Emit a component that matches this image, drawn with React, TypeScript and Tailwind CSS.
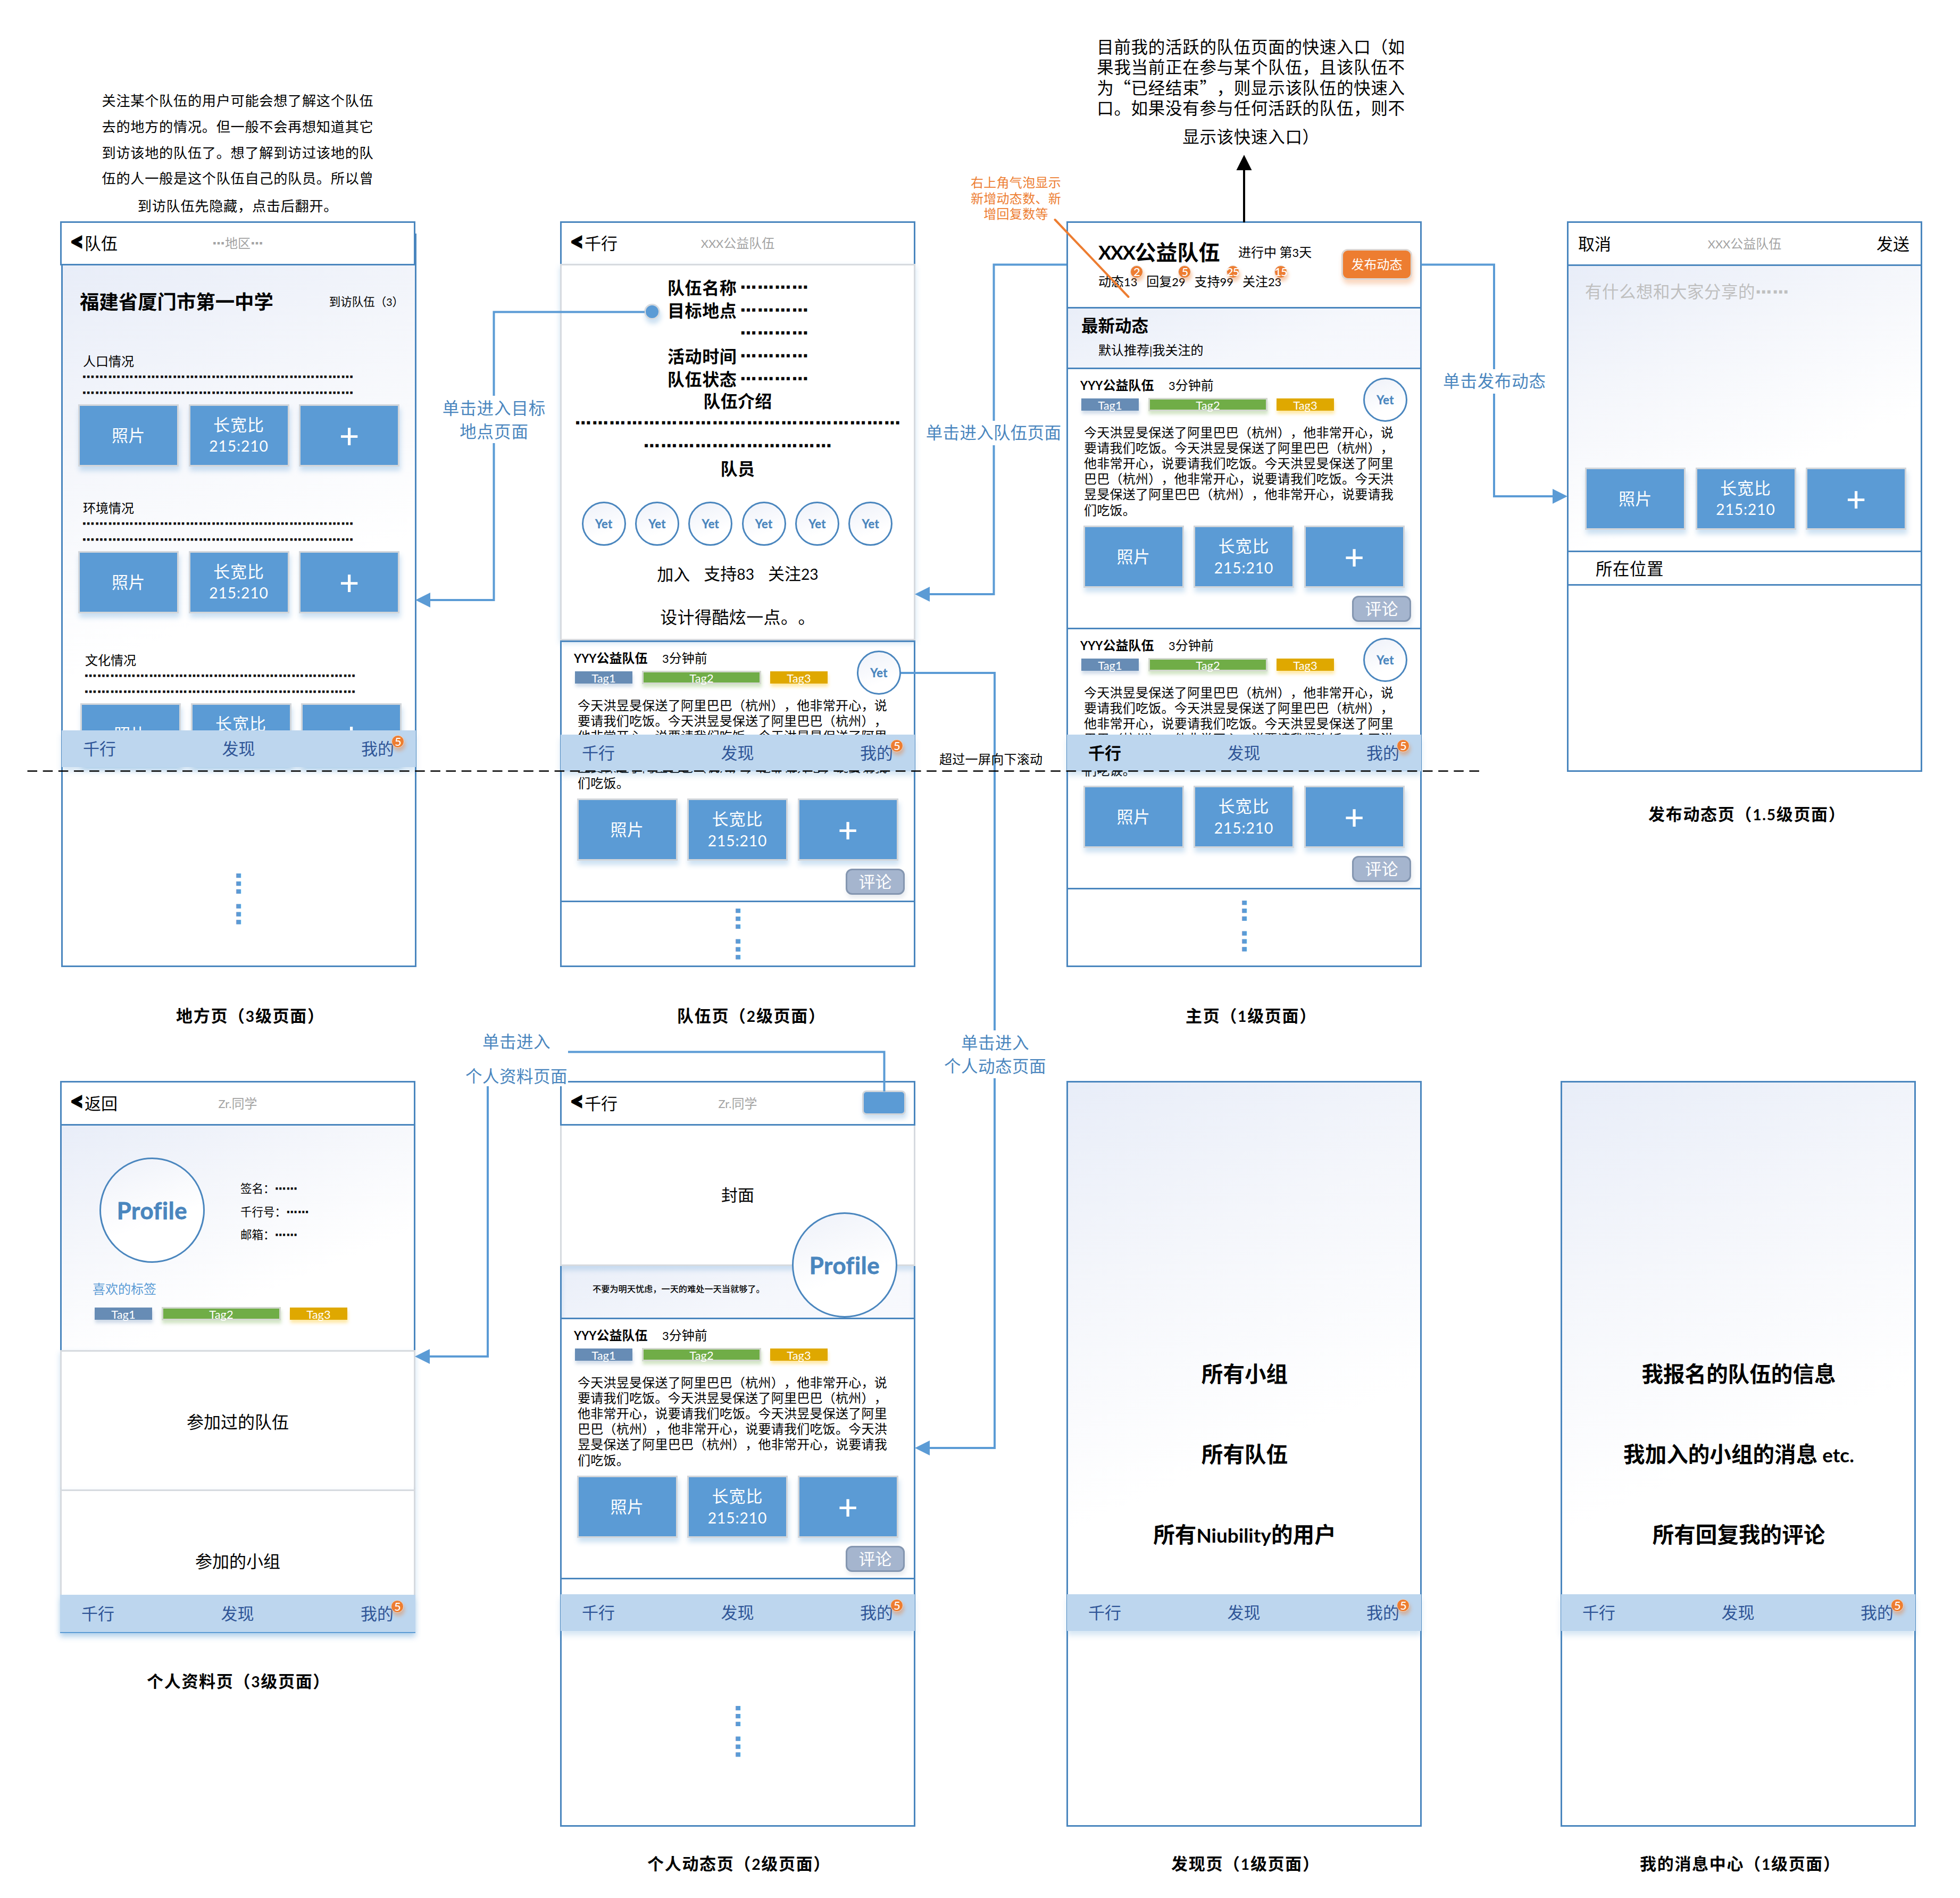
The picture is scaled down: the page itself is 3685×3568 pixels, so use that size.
import React from 'react';
import { clsx } from 'clsx';

type TextProps = { children: string; className?: string };

/* Inline text: Latin runs and ellipses get their own face and size next to the CJK text. */
function T({ children, className }: TextProps) {
  const runs = children.split(/(…+|[\x20-\x7e]+)/).filter(Boolean);
  return (
    <span
      lang="zh-CN"
      className={clsx(
        "inline-block shrink-0 -translate-y-[0.055em] font-['Noto_Sans_CJK_SC',sans-serif] leading-none whitespace-pre [text-spacing-trim:space-all]",
        className,
      )}
    >
      {runs.map((run, i) => {
        if (run[0] === '…') {
          return (
            <span
              key={i}
              className="relative -top-[0.29em] font-['Liberation_Sans',sans-serif] font-bold [-webkit-text-stroke:0.04em]"
            >
              {run}
            </span>
          );
        }
        if (/^[\x20-\x7e]/.test(run)) {
          return (
            <span key={i} className="font-['Lato',sans-serif] text-[0.91em]">
              {run}
            </span>
          );
        }
        return <span key={i}>{run}</span>;
      })}
    </span>
  );
}

const gradient = 'bg-[linear-gradient(157deg,#e8edf8_0%,#f4f6fb_32%,#ffffff_68%)]';

function Back({ label }: { label: string }) {
  return (
    <div className="flex items-center pl-4">
      <span className="mr-px flex h-[40px] w-[26px] -translate-y-[5px] items-center justify-center font-['Lato',sans-serif] text-[42px] leading-none font-black text-black [-webkit-text-stroke:3.5px]">
        {'<'}
      </span>
      <T className="text-[31px]">{label}</T>
    </div>
  );
}

function Bar({
  left,
  title,
  right,
  className,
}: {
  left: React.ReactNode;
  title: string;
  right?: React.ReactNode;
  className?: string;
}) {
  return (
    <div className={clsx('grid shrink-0 grid-cols-[1fr_auto_1fr] items-center bg-white', className)}>
      {left}
      <T className="text-[24px] text-[#a3a3a3]">{title}</T>
      <div className="flex justify-end">{right}</div>
    </div>
  );
}

function Badge({ children, className }: TextProps) {
  return (
    <span
      className={clsx(
        "absolute flex size-[24px] items-center justify-center rounded-full border-[1.5px] border-[#e8dfda] bg-[#ed7d31] font-['Lato',sans-serif] text-[22px] leading-none font-medium tracking-[-1px] text-white shadow-[2px_6px_6px_rgba(237,125,49,0.4)]",
        className,
      )}
    >
      {children}
    </span>
  );
}

function Nav({ active, className }: { active?: boolean; className?: string }) {
  return (
    <div
      className={clsx(
        'flex h-[69px] shrink-0 items-center justify-between bg-[#bdd6ee] pr-[41px] pl-[40px] text-[31px] text-[#2f5597] shadow-[0_8px_10px_rgba(91,155,213,0.25)]',
        className,
      )}
    >
      <T className={active ? 'font-bold text-black' : ''}>千行</T>
      <T>发现</T>
      <span className="relative flex">
        <T>我的</T>
        <Badge className="-top-[10px] -right-[19px]">5</Badge>
      </span>
    </div>
  );
}

const tile =
  'flex h-[117px] w-[189px] shrink-0 flex-col items-center justify-center border-[3px] border-[#d3d6da] bg-[#5b9bd5] text-white shadow-[2px_8px_9px_rgba(91,155,213,0.3)]';

function Photos({ className }: { className?: string }) {
  return (
    <div className={clsx('flex shrink-0 gap-[18.5px]', className)}>
      <div className={tile}>
        <T className="text-[31px] tracking-[0.6px]">照片</T>
      </div>
      <div className={tile}>
        <div className="flex h-10 items-center">
          <T className="text-[31px] tracking-[1px]">长宽比</T>
        </div>
        <div className="flex h-10 items-center">
          <T className="text-[31px] tracking-[0.9px]">215:210</T>
        </div>
      </div>
      <div className={tile}>
        <span className="font-['Lato',sans-serif] text-[65px] leading-none font-medium">+</span>
      </div>
    </div>
  );
}

function Tags({ className }: { className?: string }) {
  return (
    <div className={clsx('flex h-[23px] shrink-0 items-center text-[24px] text-white', className)}>
      <div className="flex h-[23px] w-[108px] items-center justify-center bg-[#678cb5] pt-px shadow-[1px_6px_6px_rgba(103,140,181,0.3)]">
        <T>Tag1</T>
      </div>
      <div className="ml-[18px] flex h-[25px] w-[224px] items-center justify-center border-[3px] border-[#d3d8cf] bg-[#70ad47] pt-px shadow-[1px_6px_6px_rgba(112,173,71,0.3)]">
        <T>Tag2</T>
      </div>
      <div className="ml-[17px] flex h-[23px] w-[108px] items-center justify-center bg-[#dfa800] pt-px shadow-[1px_6px_6px_rgba(255,192,0,0.35)]">
        <T>Tag3</T>
      </div>
    </div>
  );
}

function Avatar({ className }: { className?: string }) {
  return (
    <div
      className={clsx(
        'flex size-[83px] shrink-0 items-center justify-center rounded-full border-[3px] border-[#4a86be] bg-[linear-gradient(160deg,#eef1f9_0%,#ffffff_70%)] text-[24px] font-bold tracking-[0.4px] text-[#4a86be] [-webkit-text-stroke:0.4px]',
        className,
      )}
    >
      <T>Yet</T>
    </div>
  );
}

function Profile({ className }: { className?: string }) {
  return (
    <div
      className={clsx(
        'flex size-[198px] shrink-0 items-center justify-center rounded-full border-[3px] border-[#4a86be] bg-[linear-gradient(160deg,#eef1f9_0%,#ffffff_60%)] text-[48px] font-bold tracking-[0.7px] text-[#4a86be] [-webkit-text-stroke:0.8px]',
        className,
      )}
    >
      <T>Profile</T>
    </div>
  );
}

const story = [
  '今天洪昱旻保送了阿里巴巴（杭州），他非常开心，说',
  '要请我们吃饭。今天洪昱旻保送了阿里巴巴（杭州），',
  '他非常开心，说要请我们吃饭。今天洪昱旻保送了阿里',
  '巴巴（杭州），他非常开心，说要请我们吃饭。今天洪',
  '昱旻保送了阿里巴巴（杭州），他非常开心，说要请我',
];

function Post({ author = true }: { author?: boolean }) {
  return (
    <div className="flex h-[489px] shrink-0 flex-col border-t-[3px] border-[#4a86be]">
      <div className="mt-4 flex h-[83px] justify-between pr-6 pl-[23px]">
        <div className="-mt-px flex flex-col">
          <div className="flex h-[30px] items-center text-[24px]">
            <T className="w-[166px] font-bold">YYY公益队伍</T>
            <T>3分钟前</T>
          </div>
          <Tags className="mt-[10px] ml-[2px]" />
        </div>
        {author && <Avatar />}
      </div>
      <div className="mt-[5px] flex flex-col pl-[30px] text-[24px] tracking-[0.25px]">
        {story.map((line) => (
          <div key={line} className="flex h-[29.1px] items-center">
            <T>{line}</T>
          </div>
        ))}
        <div className="flex h-8 items-center">
          <T>们吃饭。</T>
        </div>
      </div>
      <Photos className="mt-[13px] ml-[28.5px]" />
      <div className="mt-[15px] mr-[17px] flex h-[49px] w-[111px] items-center justify-center self-end rounded-xl border-[3px] border-[#8496b0] bg-[#a5b5ce] text-[31px] text-white shadow-[2px_6px_8px_rgba(132,150,176,0.2)]">
        <T>评论</T>
      </div>
    </div>
  );
}

function MoreDots({ className }: { className?: string }) {
  return (
    <div className={clsx('mr-[5px] flex h-[116px] w-[47px] items-center justify-center self-center', className)}>
      <div className="flex rotate-90">
        <T className="text-[46.7px] tracking-[11px] text-[#5b9bd5]">……</T>
      </div>
    </div>
  );
}

function Phone({ children, className }: { children: React.ReactNode; className?: string }) {
  return (
    <section className={clsx('absolute flex w-[668px] flex-col border-[3px] border-[#4a86be] bg-white', className)}>
      {children}
    </section>
  );
}

function Section({ title, className }: { title: string; className?: string }) {
  return (
    <div className={clsx('flex shrink-0 flex-col', className)}>
      <div className="flex h-[30px] items-center pl-2">
        <T className="text-[24px]">{title}</T>
      </div>
      {[0, 1].map((i) => (
        <div key={i} className="flex h-[30px] items-center pl-[6px]">
          <T className="text-[24.3px] tracking-[0.04px]">{'…'.repeat(21)}</T>
        </div>
      ))}
      <Photos className="mt-[6px] -ml-px" />
    </div>
  );
}

function PlacePage() {
  return (
    <Phone className="top-[439px] left-[115px] h-[1379px]">
      <Bar
        className="-mt-[26px] -ml-[5px] h-[83px] w-[668px] border-[3px] border-[#4a86be]"
        left={<Back label="队伍" />}
        title="…地区…"
      />
      <div className={clsx('flex h-[874px] shrink-0 flex-col pl-[30px]', gradient)}>
        <div className="mt-[38px] flex h-[60px] shrink-0 items-center justify-between pr-[21px] pl-[2px]">
          <T className="text-[36.4px] font-bold">福建省厦门市第一中学</T>
          <T className="text-[21.5px]">到访队伍（3）</T>
        </div>
        <Section title="人口情况" className="mt-[67px]" />
        <Section title="环境情况" className="mt-[63px]" />
        <Section title="文化情况" className="mt-[73px] ml-1" />
      </div>
      <Nav className="relative -mx-[2px]" />
      <MoreDots className="mt-[195px] mr-[7px]!" />
    </Phone>
  );
}

function TeamRow({ label }: { label: string }) {
  return (
    <div className="flex h-[43px] items-center pl-[199px] text-[32px] font-bold">
      <div className="flex w-[136px]">
        <T className="tracking-[0.6px]">{label}</T>
      </div>
      <T className="tracking-[0.4px]">{'…'.repeat(4)}</T>
    </div>
  );
}

function TeamPage() {
  return (
    <Phone className="top-[416px] left-[1053px] h-[1402px]">
      <Bar className="h-[77px]" left={<Back label="千行" />} title="XXX公益队伍" />
      <div className="-mx-[3px] flex h-[708px] shrink-0 flex-col border-[3px] border-[#d6dadf] bg-white pt-5 shadow-[0_5px_10px_rgba(91,155,213,0.3)]">
        <TeamRow label="队伍名称" />
        <TeamRow label="目标地点" />
        <TeamRow label="" />
        <TeamRow label="活动时间" />
        <TeamRow label="队伍状态" />
        <div className="flex flex-col text-[32px] font-bold tracking-[0.3px]">
          <div className="flex h-[40px] items-center justify-center">
            <T>队伍介绍</T>
          </div>
          <div className="flex h-[43px] items-center justify-center pt-px">
            <T>{'…'.repeat(19)}</T>
          </div>
          <div className="flex h-[43px] items-center justify-center pt-px">
            <T>{'…'.repeat(11)}</T>
          </div>
          <div className="flex h-[42px] items-center justify-center">
            <T>队员</T>
          </div>
        </div>
        <div className="mt-[41px] flex justify-center gap-[17.3px] pr-[2px]">
          {[0, 1, 2, 3, 4, 5].map((i) => (
            <Avatar key={i} />
          ))}
        </div>
        <div className="mt-[33px] flex h-10 items-center justify-center gap-[26px] text-[31px]">
          <T>加入</T>
          <T>支持83</T>
          <T>关注23</T>
        </div>
        <div className="mt-[41px] flex h-10 items-center justify-center text-[32px] tracking-[0.4px]">
          <T>设计得酷炫一点。。</T>
        </div>
      </div>
      <Post />
      <div className="flex grow flex-col border-t-[3px] border-[#4a86be]">
        <MoreDots className="mt-[7px]" />
      </div>
      <Nav className="absolute top-[962px] -right-[2px] -left-[2px]" />
    </Phone>
  );
}

const stats = [
  { text: '动态13', count: '2' },
  { text: '回复29', count: '5' },
  { text: '支持99', count: '25' },
  { text: '关注23', count: '15' },
];

function HomePage() {
  return (
    <Phone className="top-[416px] left-[2005px] h-[1402px]">
      <div className="flex h-[161px] shrink-0 items-start border-b-[3px] border-[#4a86be] bg-white">
        <div className="flex grow flex-col pt-[30px] pl-[57px]">
          <div className="flex h-[50px] items-center">
            <div className="flex w-[263px] items-center font-bold">
              <T className="text-[40px] tracking-[-1.6px]">XXX</T>
              <T className="text-[40px]">公益队伍</T>
            </div>
            <T className="text-[24px]">进行中 第3天</T>
          </div>
          <div className="mt-[15px] flex h-[30px] items-center text-[24px]">
            {stats.map((s) => (
              <span key={s.text} className="relative flex w-[90.3px]">
                <T>{s.text}</T>
                <Badge className="-top-[18px] left-[60px]">{s.count}</Badge>
              </span>
            ))}
          </div>
        </div>
        <div className="mt-[49px] mr-[15px] flex h-[58px] w-[133px] items-center justify-center rounded-xl border-[3px] border-[#dcd6d2] bg-[#ed7d31] text-[24px] text-white shadow-[2px_8px_9px_rgba(237,125,49,0.3)]">
          <T>发布动态</T>
        </div>
      </div>
      <div className="flex h-[111px] shrink-0 flex-col bg-[linear-gradient(160deg,#e9eef8_0%,#f5f7fc_60%,#f8f9fd_100%)]">
        <div className="mt-[13px] flex h-10 items-center pl-[25px]">
          <T className="text-[31.5px] font-bold">最新动态</T>
        </div>
        <div className="mt-[10px] flex h-[30px] items-center pl-[57px]">
          <T className="text-[24px]">默认推荐|我关注的</T>
        </div>
      </div>
      <Post />
      <Post />
      <div className="flex grow flex-col border-t-[3px] border-[#4a86be]">
        <MoreDots className="mt-[16px]" />
      </div>
      <Nav active className="absolute top-[962px] -right-[2px] -left-[2px]" />
    </Phone>
  );
}

function PublishPage() {
  return (
    <Phone className="top-[416px] left-[2946px] h-[1035px]">
      <Bar
        className="h-[81px] border-b-[3px] border-[#4a86be]"
        left={
          <div className="flex pl-[18px]">
            <T className="text-[31px]">取消</T>
          </div>
        }
        title="XXX公益队伍"
        right={<T className="mr-[21px] text-[31px]">发送</T>}
      />
      <div className={clsx('flex h-[535px] shrink-0 flex-col justify-between pt-[30px] pr-[30px] pb-[39px] pl-[31px]', gradient)}>
        <div className="flex h-10 items-center">
          <T className="text-[31.5px] tracking-[0.5px] text-[#bfbfbf]">有什么想和大家分享的……</T>
        </div>
        <Photos />
      </div>
      <div className="flex h-[66px] items-center border-y-[3px] border-[#4a86be] pt-[4px] pl-[51px]">
        <T className="text-[31.5px] tracking-[0.5px]">所在位置</T>
      </div>
    </Phone>
  );
}

function ProfilePage() {
  return (
    <Phone className="top-[2032px] left-[113px] h-[1038px]">
      <Bar className="h-[81px] border-b-[3px] border-[#4a86be]" left={<Back label="返回" />} title="Zr.同学" />
      <div className={clsx('flex h-[422px] shrink-0 flex-col', gradient)}>
        <div className="mt-[60px] flex items-center pl-[71px]">
          <Profile />
          <div className="ml-[67px] flex flex-col pt-[8px] text-[21.5px]">
            {['签名：……', '千行号：……', '邮箱：……'].map((line) => (
              <div key={line} className="flex h-[43.5px] items-center">
                <T>{line}</T>
              </div>
            ))}
          </div>
        </div>
        <div className="mt-[34px] flex h-[30px] items-center pl-[58px]">
          <T className="text-[24px] text-[#5b9bd5]">喜欢的标签</T>
        </div>
        <Tags className="mt-[20px] ml-[62px]" />
      </div>
      <div className="-mx-[3px] flex h-[262px] shrink-0 items-center justify-center border-[3px] border-b-0 border-[#d6dadf] bg-white pt-[4px] text-[32px] shadow-[0_5px_10px_rgba(91,155,213,0.3)]">
        <T>参加过的队伍</T>
      </div>
      <div className="-mx-[3px] flex h-[269px] shrink-0 items-center justify-center border-[3px] border-[#d6dadf] bg-white text-[32px] shadow-[0_5px_10px_rgba(91,155,213,0.3)]">
        <T>参加的小组</T>
      </div>
      <Nav className="absolute right-[-3px] bottom-[-3px] left-[-3px] h-[72px]! border-b-2 border-[#5b9bd5]" />
    </Phone>
  );
}

function FeedPage() {
  return (
    <Phone className="top-[2032px] left-[1053px] h-[1402px]">
      <Bar
        className="h-[81px] border-b-[3px] border-[#4a86be]"
        left={<Back label="千行" />}
        title="Zr.同学"
        right={
          <div className="mr-[15px] -mt-[3px] h-[46px] w-[82px] rounded-lg border-[3px] border-[#d3d6da] bg-[#5b9bd5] shadow-[2px_7px_8px_rgba(91,155,213,0.3)]" />
        }
      />
      <div className="-mx-[3px] flex h-[264px] shrink-0 items-center justify-center border-[3px] border-t-0 border-[#d6dadf] bg-white text-[31px]">
        <T>封面</T>
      </div>
      <div className="relative h-[97px] shrink-0 bg-[linear-gradient(160deg,#e9eef8_0%,#f5f7fc_60%,#f8f9fd_100%)] shadow-[inset_0_8px_8px_rgba(91,155,213,0.25)]">
        <div className="flex h-[87px] items-center pl-[58px]">
          <T className="text-[16.2px] font-medium">不要为明天忧虑，一天的难处一天当就够了。</T>
        </div>
        <Profile className="absolute -top-[101px] left-[433px]" />
      </div>
      <Post author={false} />
      <div className="h-[31px] shrink-0 border-t-[3px] border-[#4a86be]" />
      <Nav className="-mx-[2px]" />
      <MoreDots className="mt-[136px]" />
    </Phone>
  );
}

function ListPage({ lines, className }: { lines: string[]; className?: string }) {
  return (
    <Phone className={clsx('top-[2032px] h-[1402px]', className)}>
      <div className={clsx('flex h-[962px] shrink-0 flex-col pt-[473px] pl-[2px]', gradient)}>
        {lines.map((line) => (
          <div key={line} className="flex h-[151px] items-center justify-center">
            <T className="text-[40.6px] font-bold">{line}</T>
          </div>
        ))}
      </div>
      <Nav className="-mx-[2px]" />
    </Phone>
  );
}

function Caption({ children, className }: TextProps) {
  return (
    <div className={clsx('absolute flex h-10 items-center text-[31px] font-bold tracking-[1.7px]', className)}>
      <T>{children}</T>
    </div>
  );
}

function Note({ lines, className, row }: { lines: string[]; className?: string; row: string }) {
  return (
    <div className={clsx('absolute flex flex-col items-center', className)}>
      {lines.map((line) => (
        <div key={line} className={clsx('flex items-center', row)}>
          <T>{line}</T>
        </div>
      ))}
    </div>
  );
}

function Connectors() {
  return (
    <svg className="absolute top-0 left-0" width="3685" height="3568" viewBox="0 0 3685 3568" fill="none">
      <g stroke="#5b9bd5" strokeWidth="4">
        <path d="M1212 586.5H928.5V1128H806" />
        <path d="M2005 497.5H1868.5V1117H1745" />
        <path d="M2672 497.5H2809V933H2922" />
        <path d="M1694 1265H1870V2722H1745" />
        <path d="M1662.5 2052V1977.5H917V2550H806" />
      </g>
      <g fill="#5b9bd5">
        <path d="M781 1128l28-14v28z" />
        <path d="M1720 1117l28-14v28z" />
        <path d="M2947 933l-28-14v28z" />
        <path d="M1720 2722l28-14v28z" />
        <path d="M780 2550l28-14v28z" />
      </g>
      <path d="M2339 418V316" stroke="#000" strokeWidth="4" />
      <path d="M2339 291l14.5 29h-29z" fill="#000" />
      <path d="M1983.5 413L2121.5 558" stroke="#ed7d31" strokeWidth="4" strokeLinecap="round" />
      <path d="M51.5 1449.5H2782" stroke="#000" strokeWidth="2.5" strokeDasharray="18.5 10.65" />
    </svg>
  );
}

export default function App() {
  return (
    <main className="relative h-[3568px] w-[3685px] overflow-hidden bg-white text-black">
      <PlacePage />
      <TeamPage />
      <HomePage />
      <PublishPage />
      <ProfilePage />
      <FeedPage />
      <ListPage className="left-[2005px]" lines={['所有小组', '所有队伍', '所有Niubility的用户']} />
      <ListPage className="left-[2934px]" lines={['我报名的队伍的信息', '我加入的小组的消息 etc.', '所有回复我的评论']} />

      <div className="absolute top-[571px] left-[1211px] size-[30px] rounded-full border-[3px] border-[#d6dadf] bg-[#5b9bd5] shadow-[2px_8px_9px_rgba(91,155,213,0.3)]" />
      <Connectors />

      <Note
        className="top-[165px] left-[191px] w-[512px] text-[26.2px] tracking-[0.7px]"
        row="h-[48.7px] last:h-[55px]"
        lines={[
          '关注某个队伍的用户可能会想了解这个队伍',
          '去的地方的情况。但一般不会再想知道其它',
          '到访该地的队伍了。想了解到访过该地的队',
          '伍的人一般是这个队伍自己的队员。所以曾',
          '到访队伍先隐藏，点击后翻开。',
        ]}
      />
      <Note
        className="top-[69px] left-[2060px] w-[584px] text-[31.5px] tracking-[0.7px]"
        row="h-[38.6px] last:h-[69px]"
        lines={[
          '目前我的活跃的队伍页面的快速入口（如',
          '果我当前正在参与某个队伍，且该队伍不',
          '为“已经结束”，则显示该队伍的快速入',
          '口。如果没有参与任何活跃的队伍，则不',
          '显示该快速入口）',
        ]}
      />
      <Note
        className="top-[328px] left-[1824px] w-[172px] text-[24px] tracking-[0.3px] text-[#ed7d31]"
        row="h-[29.8px]"
        lines={['右上角气泡显示', '新增动态数、新', '增回复数等']}
      />
      <Note
        className="top-[744px] left-[828px] w-[202px] bg-white pt-[2px] text-[31.5px] tracking-[0.9px] text-[#4a86be]"
        row="h-[43.5px]"
        lines={['单击进入目标', '地点页面']}
      />
      <Note
        className="top-[791px] left-[1739px] w-[258px] text-[31.5px] tracking-[0.3px] text-[#4a86be]"
        row="h-[46px] bg-white"
        lines={['单击进入队伍页面']}
      />
      <Note
        className="top-[694px] left-[2712px] w-[196px] bg-white text-[31.5px] tracking-[0.8px] text-[#4a86be]"
        row="h-[46px]"
        lines={['单击发布动态']}
      />
      <Note
        className="top-[1937px] left-[1772px] w-[198px] bg-white pt-[2px] text-[31.5px] tracking-[0.5px] text-[#4a86be]"
        row="h-[44px]"
        lines={['单击进入', '个人动态页面']}
      />
      <Note
        className="top-[1927px] left-[874px] w-[194px] bg-white text-[31.5px] tracking-[0.5px] text-[#4a86be]"
        row="h-[64px] last:mt-[15px] last:h-9"
        lines={['单击进入', '个人资料页面']}
      />
      <div className="absolute top-[1412px] left-[1766px] flex h-[30px] items-center">
        <T className="text-[24px] tracking-[0.3px]">超过一屏向下滚动</T>
      </div>

      <Caption className="top-[1890px] left-[331px]">地方页（3级页面）</Caption>
      <Caption className="top-[1890px] left-[1273px]">队伍页（2级页面）</Caption>
      <Caption className="top-[1890px] left-[2229px]">主页（1级页面）</Caption>
      <Caption className="top-[1511px] left-[3099px]">发布动态页（1.5级页面）</Caption>
      <Caption className="top-[3141px] left-[276px]">个人资料页（3级页面）</Caption>
      <Caption className="top-[3484px] left-[1217px]">个人动态页（2级页面）</Caption>
      <Caption className="top-[3484px] left-[2202px]">发现页（1级页面）</Caption>
      <Caption className="top-[3484px] left-[3083px]">我的消息中心（1级页面）</Caption>
    </main>
  );
}
